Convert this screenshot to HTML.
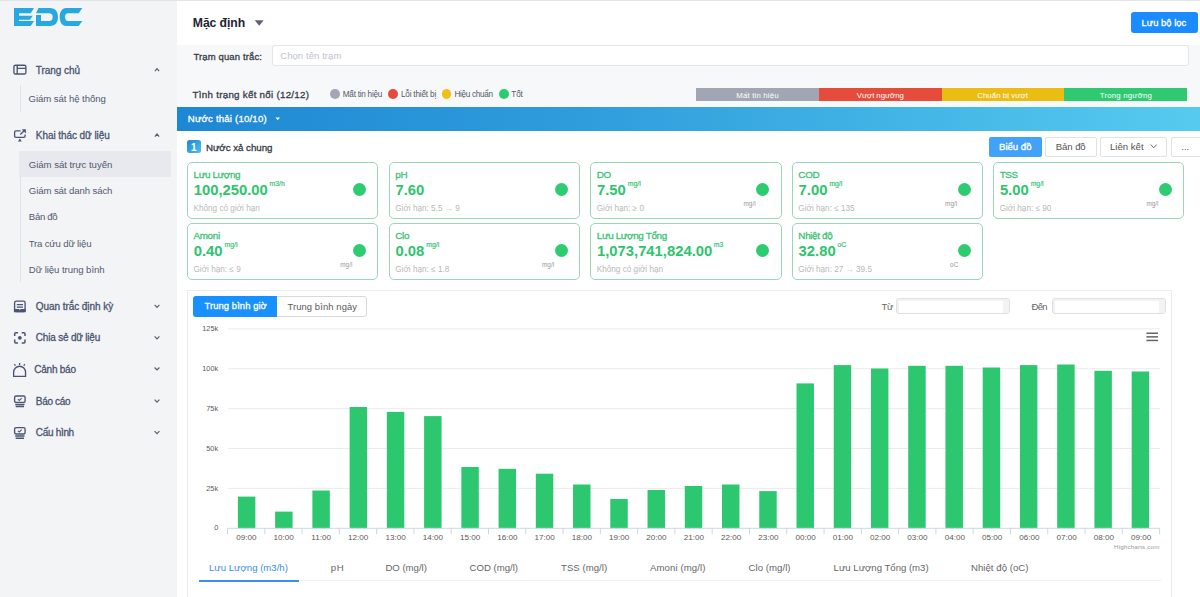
<!DOCTYPE html>
<html><head><meta charset="utf-8">
<style>
*{margin:0;padding:0;box-sizing:border-box}
html,body{width:1200px;height:597px;overflow:hidden;background:#fff;font-family:"Liberation Sans",sans-serif}
.t{position:absolute;white-space:nowrap;line-height:40px}
</style></head><body>
<div style="position:absolute;left:0px;top:0px;width:1200px;height:1px;background:#e3e4e8"></div>
<div style="position:absolute;left:0px;top:1px;width:177px;height:596px;background:#f3f4f6"></div>
<div style="position:absolute;left:177px;top:1px;width:1023px;height:43.5px;background:#fff"></div>
<div style="position:absolute;left:177px;top:44.5px;width:1023px;height:62px;background:#f7f8fa"></div>
<svg style="position:absolute;left:0;top:0" width="100" height="40" viewBox="0 0 100 40"><g fill="#27a8e0">
<path d="M14,8 H34 L30.7,13.3 H19 V15.7 H32.7 L30,19.7 H19 V21 H34 L30.7,26 H14 Z"/>
<path d="M38.5,8 H50 C55.5,8 58,12 58,17 C58,22 55.5,26 50,26 H36 V15 H41 V21 H49 C51.5,21 52.7,19.5 52.7,17 C52.7,14.5 51.5,13.3 49,13.3 H36 Z"/>
<path d="M82.3,8 L78.7,13.3 H68 C66,13.3 65,14.8 65,17 C65,19.3 66,21 68,21 H82.3 L78.7,26 H66 C62,26 59.7,22 59.7,17 C59.7,12 62,8 66,8 Z"/>
</g></svg>
<svg style="position:absolute;left:0;top:0" width="177" height="460" viewBox="0 0 177 460" fill="none" stroke="#4a5571" stroke-width="1.35">
<rect x="13.9" y="65.2" width="12" height="8.8" rx="1.6"/>
<path d="M17.2,65.2 V74 M17.2,68.3 H25.9"/>
<path d="M20.6,130.9 H15.9 Q14.6,130.9 14.6,132.2 V136 Q14.6,137.3 15.9,137.3 H23.8 Q25.1,137.3 25.1,136 V134.4"/>
<path d="M20.2,134.6 L24.2,130.8"/>
<path d="M22.3,129.6 H25.6 V132.9 Z" fill="#4a5571" stroke-width="0.6"/>
<path d="M17.9,141.4 H21.8 L19.85,138.6 Z" fill="#4a5571" stroke="none"/>
<rect x="14.6" y="301.1" width="10.5" height="10.5" rx="1.6"/>
<path d="M16.8,304.6 H23 M16.8,307.1 H23"/>
<path d="M14.6,309.6 H18.6 L19.85,311 L21.1,309.6 H25.1 V311.6 H14.6 Z" fill="#4a5571"/>
<path d="M14.7,336 V333.8 Q14.7,332.7 15.8,332.7 H18 M21.7,332.7 H23.9 Q25,332.7 25,333.8 V336 M25,339.6 V341.8 Q25,342.9 23.9,342.9 H21.7 M18,342.9 H15.8 Q14.7,342.9 14.7,341.8 V339.6" stroke-width="1.5"/>
<circle cx="19.85" cy="337.8" r="1.9" fill="#4a5571" stroke="none"/>
<path d="M13.65,376.3 V372.2 A5.95,5.95 0 0 1 25.55,372.2 V376.3 Z" stroke-width="1.35"/>
<path d="M19.6,363 V365 M14.3,364.3 L15.5,365.6 M24.9,364.3 L23.7,365.6" stroke-width="1.3"/>
<rect x="14.6" y="396" width="10.5" height="6.4" rx="1.5"/>
<path d="M17.9,399.2 L19.3,400.4 L21.7,398.1" stroke-width="1.1"/>
<path d="M15.2,404.5 H24.5 M15.7,406.6 H24" stroke-width="1.5"/>
<rect x="14.6" y="427.6" width="10.5" height="6.4" rx="1.5"/>
<path d="M17.9,430.8 L19.3,432 L21.7,429.7" stroke-width="1.1"/>
<path d="M15.2,436.1 H24.5 M15.7,438.2 H24" stroke-width="1.5"/>
<g stroke="#585e6a" stroke-width="1.2">
<path d="M154.9,71.2 L157,68.6 L159.1,71.2"/>
<path d="M154.9,136.6 L157,134 L159.1,136.6"/>
<path d="M154.6,304.9 L157,307.4 L159.4,304.9"/>
<path d="M154.6,336.3 L157,338.8 L159.4,336.3"/>
<path d="M154.6,367.5 L157,370 L159.4,367.5"/>
<path d="M154.6,399.7 L157,402.2 L159.4,399.7"/>
<path d="M154.6,431.1 L157,433.6 L159.4,431.1"/>
</g>
</svg>
<div style="position:absolute;left:19.5px;top:85px;width:1px;height:26.6px;background:#dfe2e7"></div>
<div style="position:absolute;left:19.5px;top:151.3px;width:1px;height:131px;background:#dfe2e7"></div>
<div style="position:absolute;left:19px;top:151.3px;width:152.3px;height:26.1px;background:#e7e9ee"></div>
<svg style="position:absolute;left:250px;top:16px" width="20" height="14"><path d="M4.7,4.3 H13.7 L9.2,9.8 Z" fill="#5d6272"/></svg>
<div style="position:absolute;left:1130.5px;top:12.4px;width:67px;height:20.9px;background:#1a8cff;border-radius:3px"></div>
<div style="position:absolute;left:272.4px;top:45.4px;width:916.8px;height:20.8px;background:#fff;border:1px solid #e3e5e9;border-radius:3px"></div>
<div style="position:absolute;left:330.0px;top:89px;width:9.8px;height:9.8px;background:#a3a6b4;border-radius:50%"></div>
<div style="position:absolute;left:388.3px;top:89px;width:9.8px;height:9.8px;background:#e54a3e;border-radius:50%"></div>
<div style="position:absolute;left:441.6px;top:89px;width:9.8px;height:9.8px;background:#efbf1a;border-radius:50%"></div>
<div style="position:absolute;left:498.90000000000003px;top:89px;width:9.8px;height:9.8px;background:#2ecb6e;border-radius:50%"></div>
<div style="position:absolute;left:696.4px;top:87.7px;width:122.20000000000005px;height:13.4px;background:#a2a5b3"></div>
<div style="position:absolute;left:818.6px;top:87.7px;width:123.10000000000002px;height:13.4px;background:#e54c3c"></div>
<div style="position:absolute;left:941.7px;top:87.7px;width:122.20000000000005px;height:13.4px;background:#ebbd13"></div>
<div style="position:absolute;left:1063.9px;top:87.7px;width:123.0px;height:13.4px;background:#2ec971"></div>
<div style="position:absolute;left:177px;top:106.5px;width:1023px;height:24px;background:linear-gradient(90deg,#1e87d3 0%,#2f9ddc 40%,#56cbef 100%)"></div>
<svg style="position:absolute;left:270px;top:112px" width="16" height="12"><path d="M5.5,5.5 H10 L7.75,8.2 Z" fill="#fff"/></svg>
<div style="position:absolute;left:187.3px;top:140.2px;width:13.4px;height:12.7px;background:linear-gradient(135deg,#2186d6,#4dbfee);border-radius:2.5px"></div>
<div style="position:absolute;left:988.6px;top:136.5px;width:53.4px;height:20.2px;background:#42a1f8;border-radius:2px"></div>
<div style="position:absolute;left:1045px;top:136.5px;width:51.5px;height:20.2px;background:#fff;border:1px solid #dfe2e6;border-radius:2px"></div>
<div style="position:absolute;left:1099.7px;top:136.5px;width:67.7px;height:20.2px;background:#fff;border:1px solid #dfe2e6;border-radius:2px"></div>
<svg style="position:absolute;left:1148px;top:142px" width="12" height="10"><path d="M2.8,2.6 L5.75,5.8 L8.7,2.6" fill="none" stroke="#666" stroke-width="1"/></svg>
<div style="position:absolute;left:1170.5px;top:136.5px;width:40px;height:20.2px;background:#fff;border:1px solid #dfe2e6;border-radius:2px"></div>
<div style="position:absolute;left:186.75px;top:162.0px;width:191.5px;height:56.65px;border:1.5px solid #98d8b9;border-radius:5px;background:#fff"></div>
<div style="position:absolute;left:352.95px;top:182.6px;width:13.2px;height:13.2px;background:#2ecc71;border-radius:50%"></div>
<div style="position:absolute;left:388.5px;top:162.0px;width:191.5px;height:56.65px;border:1.5px solid #98d8b9;border-radius:5px;background:#fff"></div>
<div style="position:absolute;left:554.7px;top:182.6px;width:13.2px;height:13.2px;background:#2ecc71;border-radius:50%"></div>
<div style="position:absolute;left:590.0px;top:162.0px;width:191.5px;height:56.65px;border:1.5px solid #98d8b9;border-radius:5px;background:#fff"></div>
<div style="position:absolute;left:756.2px;top:182.6px;width:13.2px;height:13.2px;background:#2ecc71;border-radius:50%"></div>
<div style="position:absolute;left:791.6px;top:162.0px;width:191.5px;height:56.65px;border:1.5px solid #98d8b9;border-radius:5px;background:#fff"></div>
<div style="position:absolute;left:957.8px;top:182.6px;width:13.2px;height:13.2px;background:#2ecc71;border-radius:50%"></div>
<div style="position:absolute;left:992.9px;top:162.0px;width:191.5px;height:56.65px;border:1.5px solid #98d8b9;border-radius:5px;background:#fff"></div>
<div style="position:absolute;left:1159.1px;top:182.6px;width:13.2px;height:13.2px;background:#2ecc71;border-radius:50%"></div>
<div style="position:absolute;left:186.75px;top:223.25px;width:191.5px;height:56.65px;border:1.5px solid #98d8b9;border-radius:5px;background:#fff"></div>
<div style="position:absolute;left:352.95px;top:243.85px;width:13.2px;height:13.2px;background:#2ecc71;border-radius:50%"></div>
<div style="position:absolute;left:388.5px;top:223.25px;width:191.5px;height:56.65px;border:1.5px solid #98d8b9;border-radius:5px;background:#fff"></div>
<div style="position:absolute;left:554.7px;top:243.85px;width:13.2px;height:13.2px;background:#2ecc71;border-radius:50%"></div>
<div style="position:absolute;left:590.0px;top:223.25px;width:191.5px;height:56.65px;border:1.5px solid #98d8b9;border-radius:5px;background:#fff"></div>
<div style="position:absolute;left:756.2px;top:243.85px;width:13.2px;height:13.2px;background:#2ecc71;border-radius:50%"></div>
<div style="position:absolute;left:791.6px;top:223.25px;width:191.5px;height:56.65px;border:1.5px solid #98d8b9;border-radius:5px;background:#fff"></div>
<div style="position:absolute;left:957.8px;top:243.85px;width:13.2px;height:13.2px;background:#2ecc71;border-radius:50%"></div>
<div style="position:absolute;left:187px;top:290.2px;width:984.8px;height:320px;border:1px solid #ebebeb;background:#fff"></div>
<div style="position:absolute;left:193.1px;top:296px;width:174.1px;height:21px;border:1px solid #d9d9d9;border-radius:3px;background:#fff"></div>
<div style="position:absolute;left:193.1px;top:296px;width:83.6px;height:21px;background:#1890ff;border-radius:3px 0 0 3px"></div>
<div style="position:absolute;left:895.8px;top:298.3px;width:114.2px;height:16px;border:1px solid #e0e0e0;border-radius:3px;background:#fff;box-shadow:inset 1px 1px 0 1px #f2f2f2"></div>
<div style="position:absolute;left:1003px;top:299.5px;width:5.8px;height:13.6px;background:#f3f3f3"></div>
<div style="position:absolute;left:1051.6px;top:298.3px;width:114.2px;height:16px;border:1px solid #e0e0e0;border-radius:3px;background:#fff;box-shadow:inset 1px 1px 0 1px #f2f2f2"></div>
<div style="position:absolute;left:1158.8px;top:299.5px;width:5.8px;height:13.6px;background:#f3f3f3"></div>
<svg style="position:absolute;left:0;top:0" width="1200" height="597" viewBox="0 0 1200 597"><rect x="228" y="487.90" width="932" height="1" fill="#ebebeb"/><rect x="228" y="448.00" width="932" height="1" fill="#ebebeb"/><rect x="228" y="408.10" width="932" height="1" fill="#ebebeb"/><rect x="228" y="368.20" width="932" height="1" fill="#ebebeb"/><rect x="228" y="328.30" width="932" height="1" fill="#ebebeb"/><rect x="237.90" y="496.6" width="17.45" height="31.70" fill="#2dc770"/><rect x="275.14" y="511.6" width="17.45" height="16.70" fill="#2dc770"/><rect x="312.38" y="490.5" width="17.45" height="37.80" fill="#2dc770"/><rect x="349.62" y="407" width="17.45" height="121.30" fill="#2dc770"/><rect x="386.86" y="411.9" width="17.45" height="116.40" fill="#2dc770"/><rect x="424.10" y="416.1" width="17.45" height="112.20" fill="#2dc770"/><rect x="461.34" y="467" width="17.45" height="61.30" fill="#2dc770"/><rect x="498.58" y="468.8" width="17.45" height="59.50" fill="#2dc770"/><rect x="535.82" y="473.7" width="17.45" height="54.60" fill="#2dc770"/><rect x="573.06" y="484.5" width="17.45" height="43.80" fill="#2dc770"/><rect x="610.30" y="499" width="17.45" height="29.30" fill="#2dc770"/><rect x="647.54" y="490" width="17.45" height="38.30" fill="#2dc770"/><rect x="684.78" y="486" width="17.45" height="42.30" fill="#2dc770"/><rect x="722.02" y="484.5" width="17.45" height="43.80" fill="#2dc770"/><rect x="759.26" y="491.1" width="17.45" height="37.20" fill="#2dc770"/><rect x="796.50" y="383.4" width="17.45" height="144.90" fill="#2dc770"/><rect x="833.74" y="365.1" width="17.45" height="163.20" fill="#2dc770"/><rect x="870.98" y="368.5" width="17.45" height="159.80" fill="#2dc770"/><rect x="908.22" y="365.8" width="17.45" height="162.50" fill="#2dc770"/><rect x="945.46" y="365.8" width="17.45" height="162.50" fill="#2dc770"/><rect x="982.70" y="367.5" width="17.45" height="160.80" fill="#2dc770"/><rect x="1019.94" y="365.1" width="17.45" height="163.20" fill="#2dc770"/><rect x="1057.18" y="364.5" width="17.45" height="163.80" fill="#2dc770"/><rect x="1094.42" y="370.8" width="17.45" height="157.50" fill="#2dc770"/><rect x="1131.66" y="371.5" width="17.45" height="156.80" fill="#2dc770"/><rect x="227.5" y="527.8" width="932.2" height="1" fill="#ccd6eb"/><rect x="227.00" y="528.3" width="1" height="6" fill="#ccd6eb"/><rect x="264.28" y="528.3" width="1" height="6" fill="#ccd6eb"/><rect x="301.57" y="528.3" width="1" height="6" fill="#ccd6eb"/><rect x="338.85" y="528.3" width="1" height="6" fill="#ccd6eb"/><rect x="376.14" y="528.3" width="1" height="6" fill="#ccd6eb"/><rect x="413.42" y="528.3" width="1" height="6" fill="#ccd6eb"/><rect x="450.70" y="528.3" width="1" height="6" fill="#ccd6eb"/><rect x="487.99" y="528.3" width="1" height="6" fill="#ccd6eb"/><rect x="525.27" y="528.3" width="1" height="6" fill="#ccd6eb"/><rect x="562.56" y="528.3" width="1" height="6" fill="#ccd6eb"/><rect x="599.84" y="528.3" width="1" height="6" fill="#ccd6eb"/><rect x="637.12" y="528.3" width="1" height="6" fill="#ccd6eb"/><rect x="674.41" y="528.3" width="1" height="6" fill="#ccd6eb"/><rect x="711.69" y="528.3" width="1" height="6" fill="#ccd6eb"/><rect x="748.98" y="528.3" width="1" height="6" fill="#ccd6eb"/><rect x="786.26" y="528.3" width="1" height="6" fill="#ccd6eb"/><rect x="823.54" y="528.3" width="1" height="6" fill="#ccd6eb"/><rect x="860.83" y="528.3" width="1" height="6" fill="#ccd6eb"/><rect x="898.11" y="528.3" width="1" height="6" fill="#ccd6eb"/><rect x="935.40" y="528.3" width="1" height="6" fill="#ccd6eb"/><rect x="972.68" y="528.3" width="1" height="6" fill="#ccd6eb"/><rect x="1009.96" y="528.3" width="1" height="6" fill="#ccd6eb"/><rect x="1047.25" y="528.3" width="1" height="6" fill="#ccd6eb"/><rect x="1084.53" y="528.3" width="1" height="6" fill="#ccd6eb"/><rect x="1121.82" y="528.3" width="1" height="6" fill="#ccd6eb"/><rect x="1159.10" y="528.3" width="1" height="6" fill="#ccd6eb"/><g fill="#666"><rect x="1146.4" y="332.5" width="11.6" height="1.5"/><rect x="1146.4" y="336.1" width="11.6" height="1.5"/><rect x="1146.4" y="339.7" width="11.6" height="1.5"/></g></svg>
<div style="position:absolute;left:198.6px;top:580.3px;width:962px;height:1px;background:#eeeeee"></div>
<div style="position:absolute;left:198.7px;top:579.8px;width:100.1px;height:1.9px;background:#3b8fe8"></div>
<div class="t" style="left:35.80px;top:50.50px;font-size:10px;color:#4a5571;-webkit-text-stroke:0.3px #4a5571;letter-spacing:-0.050px">Trang chủ</div>
<div class="t" style="left:28.50px;top:79.30px;font-size:9.6px;color:#505a70;letter-spacing:-0.069px">Giám sát hệ thống</div>
<div class="t" style="left:35.80px;top:115.80px;font-size:10px;color:#4a5571;-webkit-text-stroke:0.3px #4a5571;letter-spacing:-0.069px">Khai thác dữ liệu</div>
<div class="t" style="left:28.80px;top:145.00px;font-size:9.6px;color:#505a70;letter-spacing:-0.044px">Giám sát trực tuyến</div>
<div class="t" style="left:28.80px;top:171.00px;font-size:9.6px;color:#505a70;letter-spacing:-0.100px">Giám sát danh sách</div>
<div class="t" style="left:28.80px;top:197.30px;font-size:9.6px;color:#505a70;letter-spacing:-0.300px">Bản đồ</div>
<div class="t" style="left:28.80px;top:223.50px;font-size:9.6px;color:#505a70;letter-spacing:-0.186px">Tra cứu dữ liệu</div>
<div class="t" style="left:28.80px;top:249.60px;font-size:9.6px;color:#505a70;letter-spacing:-0.059px">Dữ liệu trung bình</div>
<div class="t" style="left:35.80px;top:287.00px;font-size:10px;color:#4a5571;-webkit-text-stroke:0.3px #4a5571;letter-spacing:-0.062px">Quan trắc định kỳ</div>
<div class="t" style="left:35.80px;top:318.20px;font-size:10px;color:#4a5571;-webkit-text-stroke:0.3px #4a5571;letter-spacing:-0.200px">Chia sẻ dữ liệu</div>
<div class="t" style="left:34.30px;top:350.00px;font-size:10px;color:#4a5571;-webkit-text-stroke:0.3px #4a5571;letter-spacing:-0.243px">Cảnh báo</div>
<div class="t" style="left:35.80px;top:381.50px;font-size:10px;color:#4a5571;-webkit-text-stroke:0.3px #4a5571;letter-spacing:-0.317px">Báo cáo</div>
<div class="t" style="left:35.80px;top:412.60px;font-size:10px;color:#4a5571;-webkit-text-stroke:0.3px #4a5571;letter-spacing:-0.314px">Cấu hình</div>
<div class="t" style="left:192.80px;top:3.00px;font-size:12.2px;color:#1f2330;font-weight:bold;letter-spacing:-0.071px">Mặc định</div>
<div class="t" style="left:1141.60px;top:2.80px;font-size:9.4px;color:#fff;-webkit-text-stroke:0.3px #fff;letter-spacing:0.033px">Lưu bộ lọc</div>
<div class="t" style="left:193.50px;top:36.50px;font-size:9.5px;color:#383d48;-webkit-text-stroke:0.3px #383d48;letter-spacing:0.121px">Trạm quan trắc:</div>
<div class="t" style="left:280.20px;top:36.10px;font-size:9.5px;color:#c0c4cc;letter-spacing:0.083px">Chọn tên trạm</div>
<div class="t" style="left:192.60px;top:75.10px;font-size:9.8px;color:#383d48;-webkit-text-stroke:0.3px #383d48;letter-spacing:0.256px">Tình trạng kết nối (12/12)</div>
<div class="t" style="left:342.80px;top:74.90px;font-size:8.2px;color:#555b66;letter-spacing:-0.255px">Mất tin hiệu</div>
<div class="t" style="left:400.90px;top:74.90px;font-size:8.2px;color:#555b66;letter-spacing:-0.182px">Lỗi thiết bị</div>
<div class="t" style="left:454.40px;top:74.90px;font-size:8.2px;color:#555b66;letter-spacing:-0.311px">Hiệu chuẩn</div>
<div class="t" style="left:511.30px;top:74.90px;font-size:8.2px;color:#555b66;letter-spacing:-0.150px">Tốt</div>
<div class="t" style="left:736.30px;top:75.90px;font-size:7.8px;color:#fff;letter-spacing:0.173px">Mất tin hiệu</div>
<div class="t" style="left:856.80px;top:75.90px;font-size:7.8px;color:#fff;letter-spacing:-0.060px">Vượt ngưỡng</div>
<div class="t" style="left:977.20px;top:75.90px;font-size:7.8px;color:#fff;letter-spacing:0.083px">Chuẩn bị vượt</div>
<div class="t" style="left:1099.80px;top:75.90px;font-size:7.8px;color:#fff;letter-spacing:0.191px">Trong ngưỡng</div>
<div class="t" style="left:187.80px;top:99.00px;font-size:9.6px;color:#fff;-webkit-text-stroke:0.3px #fff;letter-spacing:0.200px">Nước thải (10/10)</div>
<div class="t" style="left:191.00px;top:127.50px;font-size:10px;color:#fff;font-weight:bold">1</div>
<div class="t" style="left:205.90px;top:127.60px;font-size:9.7px;color:#353a45;-webkit-text-stroke:0.3px #353a45;letter-spacing:-0.008px">Nước xả chung</div>
<div class="t" style="left:999.00px;top:126.90px;font-size:9.6px;color:#fff;-webkit-text-stroke:0.3px #fff">Biểu đồ</div>
<div class="t" style="left:1055.80px;top:126.90px;font-size:9.6px;color:#555;letter-spacing:-0.100px">Bản đồ</div>
<div class="t" style="left:1110.00px;top:126.90px;font-size:9.6px;color:#555">Liên kết</div>
<div class="t" style="left:1181.20px;top:127.00px;font-size:9.6px;color:#555;letter-spacing:0.050px">...</div>
<div class="t" style="left:193.50px;top:155.00px;font-size:9.9px;color:#3cc476;-webkit-text-stroke:0.3px #3cc476;letter-spacing:-0.350px">Lưu Lượng</div>
<div class="t" style="left:193.75px;top:170.20px;font-size:14.8px;color:#2ec46e;font-weight:bold">100,250.00</div>
<div class="t" style="left:269.55px;top:163.80px;font-size:6.8px;color:#3cc476;-webkit-text-stroke:0.2px #3cc476">m3/h</div>
<div class="t" style="left:193.50px;top:188.70px;font-size:8.2px;color:#b8b8b8">Không có giới hạn</div>
<div class="t" style="left:395.25px;top:155.00px;font-size:9.9px;color:#3cc476;-webkit-text-stroke:0.3px #3cc476;letter-spacing:-0.350px">pH</div>
<div class="t" style="left:395.50px;top:170.20px;font-size:14.8px;color:#2ec46e;font-weight:bold">7.60</div>
<div class="t" style="left:395.25px;top:188.70px;font-size:8.2px;color:#b8b8b8">Giới hạn: 5.5 → 9</div>
<div class="t" style="left:596.75px;top:155.00px;font-size:9.9px;color:#3cc476;-webkit-text-stroke:0.3px #3cc476;letter-spacing:-0.350px">DO</div>
<div class="t" style="left:597.00px;top:170.20px;font-size:14.8px;color:#2ec46e;font-weight:bold">7.50</div>
<div class="t" style="left:627.80px;top:163.80px;font-size:6.8px;color:#3cc476;-webkit-text-stroke:0.2px #3cc476">mg/l</div>
<div class="t" style="left:596.75px;top:188.70px;font-size:8.2px;color:#b8b8b8">Giới hạn: ≥ 0</div>
<div class="t" style="left:743.50px;top:183.80px;font-size:6.4px;color:#999">mg/l</div>
<div class="t" style="left:798.35px;top:155.00px;font-size:9.9px;color:#3cc476;-webkit-text-stroke:0.3px #3cc476;letter-spacing:-0.350px">COD</div>
<div class="t" style="left:798.60px;top:170.20px;font-size:14.8px;color:#2ec46e;font-weight:bold">7.00</div>
<div class="t" style="left:829.40px;top:163.80px;font-size:6.8px;color:#3cc476;-webkit-text-stroke:0.2px #3cc476">mg/l</div>
<div class="t" style="left:798.35px;top:188.70px;font-size:8.2px;color:#b8b8b8">Giới hạn: ≤ 135</div>
<div class="t" style="left:945.10px;top:183.80px;font-size:6.4px;color:#999">mg/l</div>
<div class="t" style="left:999.65px;top:155.00px;font-size:9.9px;color:#3cc476;-webkit-text-stroke:0.3px #3cc476;letter-spacing:-0.350px">TSS</div>
<div class="t" style="left:999.90px;top:170.20px;font-size:14.8px;color:#2ec46e;font-weight:bold">5.00</div>
<div class="t" style="left:1030.70px;top:163.80px;font-size:6.8px;color:#3cc476;-webkit-text-stroke:0.2px #3cc476">mg/l</div>
<div class="t" style="left:999.65px;top:188.70px;font-size:8.2px;color:#b8b8b8">Giới hạn: ≤ 90</div>
<div class="t" style="left:1146.40px;top:183.80px;font-size:6.4px;color:#999">mg/l</div>
<div class="t" style="left:193.50px;top:216.25px;font-size:9.9px;color:#3cc476;-webkit-text-stroke:0.3px #3cc476;letter-spacing:-0.350px">Amoni</div>
<div class="t" style="left:193.75px;top:231.45px;font-size:14.8px;color:#2ec46e;font-weight:bold">0.40</div>
<div class="t" style="left:224.55px;top:225.05px;font-size:6.8px;color:#3cc476;-webkit-text-stroke:0.2px #3cc476">mg/l</div>
<div class="t" style="left:193.50px;top:249.95px;font-size:8.2px;color:#b8b8b8">Giới hạn: ≤ 9</div>
<div class="t" style="left:340.25px;top:245.05px;font-size:6.4px;color:#999">mg/l</div>
<div class="t" style="left:395.25px;top:216.25px;font-size:9.9px;color:#3cc476;-webkit-text-stroke:0.3px #3cc476;letter-spacing:-0.350px">Clo</div>
<div class="t" style="left:395.50px;top:231.45px;font-size:14.8px;color:#2ec46e;font-weight:bold">0.08</div>
<div class="t" style="left:426.30px;top:225.05px;font-size:6.8px;color:#3cc476;-webkit-text-stroke:0.2px #3cc476">mg/l</div>
<div class="t" style="left:395.25px;top:249.95px;font-size:8.2px;color:#b8b8b8">Giới hạn: ≤ 1.8</div>
<div class="t" style="left:542.00px;top:245.05px;font-size:6.4px;color:#999">mg/l</div>
<div class="t" style="left:596.75px;top:216.25px;font-size:9.9px;color:#3cc476;-webkit-text-stroke:0.3px #3cc476;letter-spacing:-0.350px">Lưu Lượng Tổng</div>
<div class="t" style="left:597.00px;top:231.45px;font-size:14.8px;color:#2ec46e;font-weight:bold">1,073,741,824.00</div>
<div class="t" style="left:713.80px;top:225.05px;font-size:6.8px;color:#3cc476;-webkit-text-stroke:0.2px #3cc476">m3</div>
<div class="t" style="left:596.75px;top:249.95px;font-size:8.2px;color:#b8b8b8">Không có giới hạn</div>
<div class="t" style="left:798.35px;top:216.25px;font-size:9.9px;color:#3cc476;-webkit-text-stroke:0.3px #3cc476;letter-spacing:-0.350px">Nhiệt độ</div>
<div class="t" style="left:798.60px;top:231.45px;font-size:14.8px;color:#2ec46e;font-weight:bold">32.80</div>
<div class="t" style="left:837.40px;top:225.05px;font-size:6.8px;color:#3cc476;-webkit-text-stroke:0.2px #3cc476">oC</div>
<div class="t" style="left:798.35px;top:249.95px;font-size:8.2px;color:#b8b8b8">Giới hạn: 27 → 39.5</div>
<div class="t" style="left:950.10px;top:245.05px;font-size:6.4px;color:#999">oC</div>
<div class="t" style="left:204.60px;top:286.40px;font-size:9.4px;color:#fff;-webkit-text-stroke:0.3px #fff;letter-spacing:0.085px">Trung bình giờ</div>
<div class="t" style="left:287.40px;top:286.90px;font-size:9.4px;color:#595959;letter-spacing:0.121px">Trung bình ngày</div>
<div class="t" style="left:881.60px;top:287.00px;font-size:9.5px;color:#666;letter-spacing:-0.400px">Từ</div>
<div class="t" style="left:1031.50px;top:287.00px;font-size:9.5px;color:#666;letter-spacing:-0.650px">Đến</div>
<div class="t" style="left:214.30px;top:508.30px;font-size:7.3px;color:#595959">0</div>
<div class="t" style="left:206.30px;top:468.80px;font-size:7.3px;color:#595959">25k</div>
<div class="t" style="left:206.30px;top:428.90px;font-size:7.3px;color:#595959">50k</div>
<div class="t" style="left:206.30px;top:389.10px;font-size:7.3px;color:#595959">75k</div>
<div class="t" style="left:202.30px;top:349.30px;font-size:7.3px;color:#595959">100k</div>
<div class="t" style="left:202.30px;top:309.30px;font-size:7.3px;color:#595959">125k</div>
<div class="t" style="left:236.24px;top:518.20px;font-size:8.1px;color:#595959">09:00</div>
<div class="t" style="left:273.53px;top:518.20px;font-size:8.1px;color:#595959">10:00</div>
<div class="t" style="left:311.31px;top:518.20px;font-size:8.1px;color:#595959">11:00</div>
<div class="t" style="left:348.09px;top:518.20px;font-size:8.1px;color:#595959">12:00</div>
<div class="t" style="left:385.38px;top:518.20px;font-size:8.1px;color:#595959">13:00</div>
<div class="t" style="left:422.66px;top:518.20px;font-size:8.1px;color:#595959">14:00</div>
<div class="t" style="left:459.95px;top:518.20px;font-size:8.1px;color:#595959">15:00</div>
<div class="t" style="left:497.23px;top:518.20px;font-size:8.1px;color:#595959">16:00</div>
<div class="t" style="left:534.51px;top:518.20px;font-size:8.1px;color:#595959">17:00</div>
<div class="t" style="left:571.80px;top:518.20px;font-size:8.1px;color:#595959">18:00</div>
<div class="t" style="left:609.08px;top:518.20px;font-size:8.1px;color:#595959">19:00</div>
<div class="t" style="left:646.37px;top:518.20px;font-size:8.1px;color:#595959">20:00</div>
<div class="t" style="left:683.65px;top:518.20px;font-size:8.1px;color:#595959">21:00</div>
<div class="t" style="left:720.93px;top:518.20px;font-size:8.1px;color:#595959">22:00</div>
<div class="t" style="left:758.22px;top:518.20px;font-size:8.1px;color:#595959">23:00</div>
<div class="t" style="left:795.50px;top:518.20px;font-size:8.1px;color:#595959">00:00</div>
<div class="t" style="left:832.79px;top:518.20px;font-size:8.1px;color:#595959">01:00</div>
<div class="t" style="left:870.07px;top:518.20px;font-size:8.1px;color:#595959">02:00</div>
<div class="t" style="left:907.35px;top:518.20px;font-size:8.1px;color:#595959">03:00</div>
<div class="t" style="left:944.64px;top:518.20px;font-size:8.1px;color:#595959">04:00</div>
<div class="t" style="left:981.92px;top:518.20px;font-size:8.1px;color:#595959">05:00</div>
<div class="t" style="left:1019.21px;top:518.20px;font-size:8.1px;color:#595959">06:00</div>
<div class="t" style="left:1056.49px;top:518.20px;font-size:8.1px;color:#595959">07:00</div>
<div class="t" style="left:1093.77px;top:518.20px;font-size:8.1px;color:#595959">08:00</div>
<div class="t" style="left:1131.06px;top:518.20px;font-size:8.1px;color:#595959">09:00</div>
<div class="t" style="left:1114.00px;top:527.00px;font-size:6.2px;color:#999;letter-spacing:0.177px">Highcharts.com</div>
<div class="t" style="left:209.00px;top:547.80px;font-size:9.6px;color:#3b8fe8">Lưu Lượng (m3/h)</div>
<div class="t" style="left:330.80px;top:547.80px;font-size:9.6px;color:#666;letter-spacing:0.600px">pH</div>
<div class="t" style="left:385.40px;top:547.80px;font-size:9.6px;color:#666;letter-spacing:-0.013px">DO (mg/l)</div>
<div class="t" style="left:469.60px;top:547.80px;font-size:9.6px;color:#666;letter-spacing:-0.011px">COD (mg/l)</div>
<div class="t" style="left:561.00px;top:547.80px;font-size:9.6px;color:#666;letter-spacing:0.033px">TSS (mg/l)</div>
<div class="t" style="left:650.00px;top:547.80px;font-size:9.6px;color:#666;letter-spacing:0.091px">Amoni (mg/l)</div>
<div class="t" style="left:748.60px;top:547.80px;font-size:9.6px;color:#666;letter-spacing:0.044px">Clo (mg/l)</div>
<div class="t" style="left:833.60px;top:547.80px;font-size:9.6px;color:#666;letter-spacing:-0.011px">Lưu Lượng Tổng (m3)</div>
<div class="t" style="left:971.00px;top:547.80px;font-size:9.6px;color:#666;letter-spacing:0.033px">Nhiệt độ (oC)</div>
</body></html>
